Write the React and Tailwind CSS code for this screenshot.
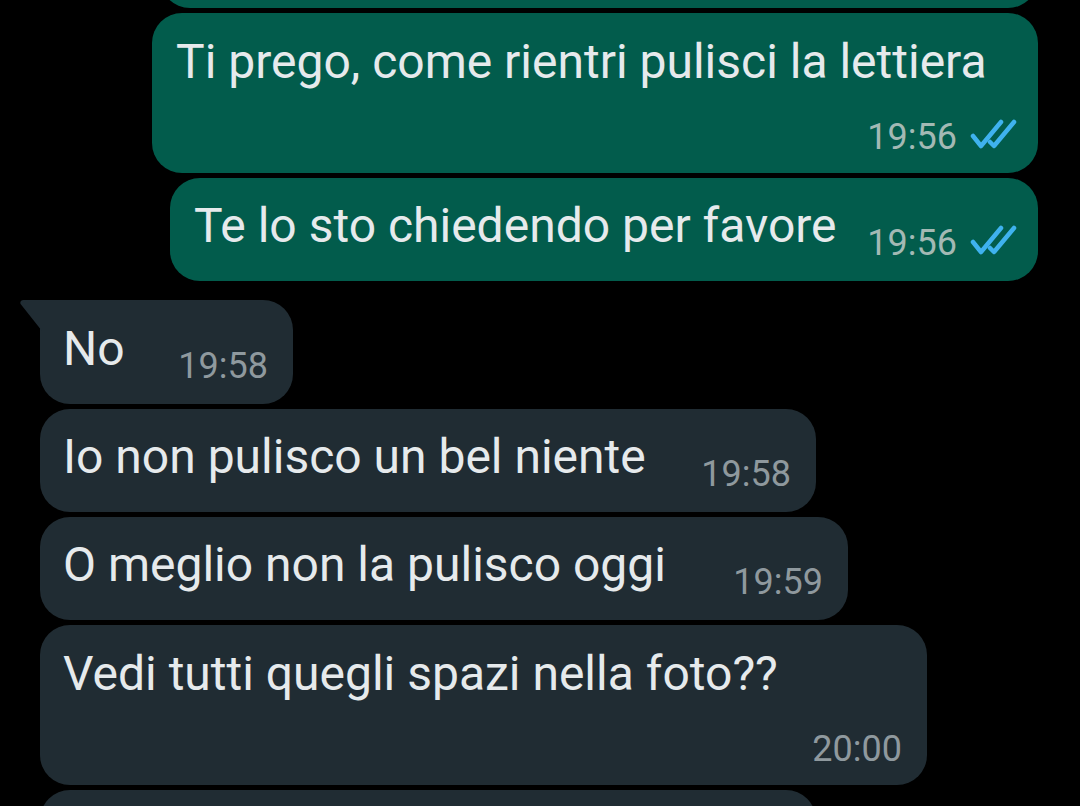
import React from "react";

const outgoing = [
  { text: "Ti prego, come rientri pulisci la lettiera", time: "19:56", width: "w-[886px]", tall: true },
  { text: "Te lo sto chiedendo per favore", time: "19:56", width: "w-[868px]" },
];

const incoming = [
  { text: "No", time: "19:58", width: "w-[253px]", tail: true },
  { text: "Io non pulisco un bel niente", time: "19:58", width: "w-[776px]" },
  { text: "O meglio non la pulisco oggi", time: "19:59", width: "w-[808px]" },
  { text: "Vedi tutti quegli spazi nella foto??", time: "20:00", width: "w-[887px]", tall: true },
];

const DoubleCheck = () => (
  <svg width="50" height="32" viewBox="0 0 50 32" className="ml-[12px] mb-[4px] shrink-0">
    <path d="M4 17 L12 27 L32 3" fill="none" stroke="#3fb2ee" strokeWidth="4.5" strokeLinecap="round" strokeLinejoin="round" />
    <path d="M21 23 L25 27 L45 3" fill="none" stroke="#3fb2ee" strokeWidth="4.5" strokeLinecap="round" strokeLinejoin="round" />
  </svg>
);

const Time = ({ time, out }) => (
  <span className={`text-[36px] leading-[40px] ${out ? "text-[#a3b9b4]" : "text-[#8f999e]"}`}>
    {time}
  </span>
);

const Bubble = ({ msg, out }) => {
  const bg = out ? "bg-[#025c4c]" : "bg-[#202c33]";
  const pad = out ? "pl-[24px] pr-[19px]" : "pl-[23px] pr-[25px]";

  if (msg.tall) {
    return (
      <div className={`${msg.width} ${bg} ${pad} rounded-[30px] pt-[21px] pb-[16px] flex flex-col`}>
        <span className="text-[48px] leading-[56px] text-[#e6eaec] whitespace-nowrap">{msg.text}</span>
        <div className="mt-[27px] flex items-center justify-end">
          <Time time={msg.time} out={out} />
          {out && <DoubleCheck />}
        </div>
      </div>
    );
  }

  return (
    <div
      className={`relative ${msg.width} ${bg} ${pad} rounded-[30px] ${msg.tail ? "rounded-tl-none pt-[21px]" : "pt-[20px]"} pb-[18px] flex items-end justify-between`}
    >
      {msg.tail && (
        <svg width="22" height="32" viewBox="0 0 22 32" className="absolute left-[-20px] top-0">
          <path d="M22 0 H3.5 C0.8 0 -0.6 2.6 1 4.6 L22 31 Z" fill="#202c33" />
        </svg>
      )}
      <span className="text-[48px] leading-[56px] mb-[9px] text-[#e6eaec] whitespace-nowrap">{msg.text}</span>
      <div className="flex items-center">
        <Time time={msg.time} out={out} />
        {out && <DoubleCheck />}
      </div>
    </div>
  );
};

export default function App() {
  return (
    <div className="h-[806px] w-[1080px] overflow-hidden bg-black font-[Roboto,sans-serif]">
      <div className="flex flex-col gap-[5px]">
        <div className="self-end mr-[42px] mt-[-95px] h-[103px] w-[878px] rounded-[30px] bg-[#025c4c]" />
        {outgoing.map((m, i) => (
          <div key={i} className="self-end mr-[42px]">
            <Bubble msg={m} out />
          </div>
        ))}
        {incoming.map((m, i) => (
          <div key={i} className={`ml-[40px] ${i === 0 ? "mt-[14px]" : ""}`}>
            <Bubble msg={m} />
          </div>
        ))}
        <div className="ml-[40px] h-[103px] w-[776px] rounded-[30px] bg-[#202c33]" />
      </div>
    </div>
  );
}
